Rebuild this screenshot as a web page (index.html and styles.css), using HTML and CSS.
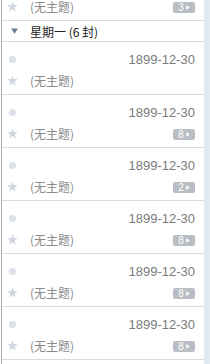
FILE: index.html
```html
<!DOCTYPE html>
<html>
<head>
<meta charset="utf-8">
<link rel="stylesheet" href="styles.css">
</head>
<body>
<div class="frame">
  <div class="pane">
    <div class="list">
      <div class="row">
        <div class="line top">
          <span class="icon"><span class="dot"></span></span>
          <span class="date">1899-12-30</span>
        </div>
        <div class="line">
          <span class="icon"><svg class="star" viewBox="0 0 10 10"><path d="M5 0.3 L6.25 3.6 L9.8 3.7 L7 5.9 L8 9.5 L5 7.4 L2 9.5 L3 5.9 L0.2 3.7 L3.75 3.6 Z"/></svg></span>
          <span class="subject">(无主题)</span>
          <span class="badge">3<svg class="tri" viewBox="0 0 4 6"><path d="M0 0 L4 3 L0 6 Z"/></svg></span>
        </div>
      </div>
      <div class="group">
        <svg class="caret" viewBox="0 0 8 6"><path d="M0 0 H8 L4 6 Z"/></svg>
        <span class="group-title">星期一 (6 封)</span>
      </div>
      <div class="row">
        <div class="line top">
          <span class="icon"><span class="dot"></span></span>
          <span class="date">1899-12-30</span>
        </div>
        <div class="line">
          <span class="icon"><svg class="star" viewBox="0 0 10 10"><path d="M5 0.3 L6.25 3.6 L9.8 3.7 L7 5.9 L8 9.5 L5 7.4 L2 9.5 L3 5.9 L0.2 3.7 L3.75 3.6 Z"/></svg></span>
          <span class="subject">(无主题)</span>
        </div>
      </div>
      <div class="row">
        <div class="line top">
          <span class="icon"><span class="dot"></span></span>
          <span class="date">1899-12-30</span>
        </div>
        <div class="line">
          <span class="icon"><svg class="star" viewBox="0 0 10 10"><path d="M5 0.3 L6.25 3.6 L9.8 3.7 L7 5.9 L8 9.5 L5 7.4 L2 9.5 L3 5.9 L0.2 3.7 L3.75 3.6 Z"/></svg></span>
          <span class="subject">(无主题)</span>
          <span class="badge">8<svg class="tri" viewBox="0 0 4 6"><path d="M0 0 L4 3 L0 6 Z"/></svg></span>
        </div>
      </div>
      <div class="row">
        <div class="line top">
          <span class="icon"><span class="dot"></span></span>
          <span class="date">1899-12-30</span>
        </div>
        <div class="line">
          <span class="icon"><svg class="star" viewBox="0 0 10 10"><path d="M5 0.3 L6.25 3.6 L9.8 3.7 L7 5.9 L8 9.5 L5 7.4 L2 9.5 L3 5.9 L0.2 3.7 L3.75 3.6 Z"/></svg></span>
          <span class="subject">(无主题)</span>
          <span class="badge">2<svg class="tri" viewBox="0 0 4 6"><path d="M0 0 L4 3 L0 6 Z"/></svg></span>
        </div>
      </div>
      <div class="row">
        <div class="line top">
          <span class="icon"><span class="dot"></span></span>
          <span class="date">1899-12-30</span>
        </div>
        <div class="line">
          <span class="icon"><svg class="star" viewBox="0 0 10 10"><path d="M5 0.3 L6.25 3.6 L9.8 3.7 L7 5.9 L8 9.5 L5 7.4 L2 9.5 L3 5.9 L0.2 3.7 L3.75 3.6 Z"/></svg></span>
          <span class="subject">(无主题)</span>
          <span class="badge">8<svg class="tri" viewBox="0 0 4 6"><path d="M0 0 L4 3 L0 6 Z"/></svg></span>
        </div>
      </div>
      <div class="row">
        <div class="line top">
          <span class="icon"><span class="dot"></span></span>
          <span class="date">1899-12-30</span>
        </div>
        <div class="line">
          <span class="icon"><svg class="star" viewBox="0 0 10 10"><path d="M5 0.3 L6.25 3.6 L9.8 3.7 L7 5.9 L8 9.5 L5 7.4 L2 9.5 L3 5.9 L0.2 3.7 L3.75 3.6 Z"/></svg></span>
          <span class="subject">(无主题)</span>
          <span class="badge">8<svg class="tri" viewBox="0 0 4 6"><path d="M0 0 L4 3 L0 6 Z"/></svg></span>
        </div>
      </div>
      <div class="row">
        <div class="line top">
          <span class="icon"><span class="dot"></span></span>
          <span class="date">1899-12-30</span>
        </div>
        <div class="line">
          <span class="icon"><svg class="star" viewBox="0 0 10 10"><path d="M5 0.3 L6.25 3.6 L9.8 3.7 L7 5.9 L8 9.5 L5 7.4 L2 9.5 L3 5.9 L0.2 3.7 L3.75 3.6 Z"/></svg></span>
          <span class="subject">(无主题)</span>
          <span class="badge">8<svg class="tri" viewBox="0 0 4 6"><path d="M0 0 L4 3 L0 6 Z"/></svg></span>
        </div>
      </div>
    </div>
  </div>
  <div class="scroll"></div>
</div>
</body>
</html>
```

FILE: styles.css
```css
* { box-sizing: border-box; }
html, body {
  margin: 0;
  padding: 0;
  background: #ffffff;
}
body {
  font-family: "Liberation Sans", "Noto Sans CJK SC", sans-serif;
}
.frame {
  display: flex;
  width: 210px;
  height: 364px;
  overflow: hidden;
}
.pane {
  flex: 1;
  margin-left: 1px;
  border-left: 1px solid #a9b2bc;
  overflow: hidden;
  background: #ffffff;
}
.list {
  margin-top: -32px;
}
.scroll {
  width: 6px;
  background: #e1e9f2;
}
.row {
  height: 53px;
  border-bottom: 1px solid #d7dce2;
  padding: 9px 9px 0 5px;
}
.line {
  display: flex;
  align-items: center;
  height: 16px;
}
.line + .line {
  margin-top: 5px;
}
.icon {
  width: 11px;
  display: flex;
  justify-content: center;
  align-items: center;
  flex: none;
}
.dot {
  width: 7px;
  height: 7px;
  border-radius: 50%;
  background: #dce1e7;
}
.star {
  width: 11px;
  height: 11px;
  fill: #d0d7df;
}
.date {
  margin-left: auto;
  font-size: 13px;
  color: #7b7b7b;
}
.subject {
  margin-left: 12px;
  font-size: 12px;
  color: #8b8b8b;
  font-family: "Noto Sans CJK SC", sans-serif;
}
.badge {
  margin-left: auto;
  margin-top: 2px;
  width: 22px;
  height: 11px;
  border-radius: 2px;
  background: #b9bec5;
  color: #ffffff;
  font-size: 10px;
  line-height: 11px;
  display: flex;
  align-items: center;
  justify-content: center;
  gap: 2px;
}
.tri {
  width: 4px;
  height: 5px;
  fill: #ffffff;
}
.group {
  height: 21px;
  border-bottom: 1px solid #d7dce2;
  display: flex;
  align-items: center;
  padding-left: 9px;
}
.caret {
  width: 7px;
  height: 6px;
  fill: #6f7c89;
}
.group-title {
  margin-left: 12px;
  font-size: 12px;
  color: #222222;
  font-family: "Noto Sans CJK SC", sans-serif;
}
```
